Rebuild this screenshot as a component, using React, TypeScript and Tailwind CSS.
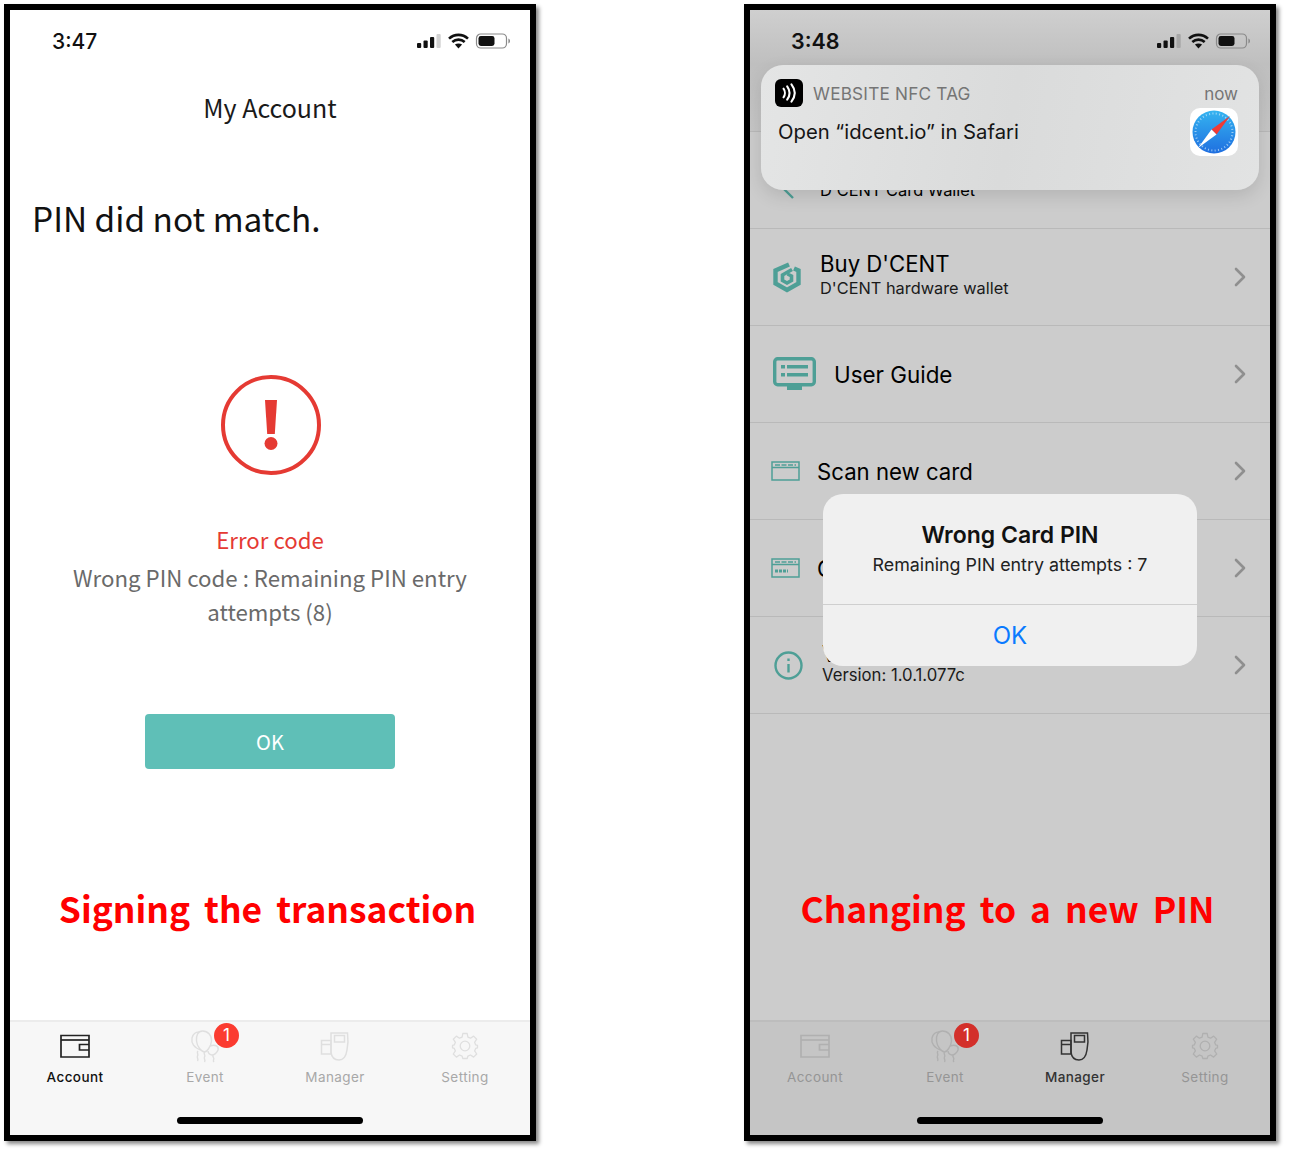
import React from "react";

const KR = "font-['Noto_Sans_CJK_KR','Noto_Sans',sans-serif]";
const IOS = "font-['Inter','Liberation_Sans',sans-serif]";

function StatusIcons({ bar, ink }: { bar: string; ink: string }) {
  return (
    <svg width="93" height="16" viewBox="0 0 93 16" fill="none">
      <rect x="0" y="10" width="4.2" height="5" rx="1" fill={ink} />
      <rect x="6.5" y="7.5" width="4.2" height="7.5" rx="1" fill={ink} />
      <rect x="13" y="4" width="4.2" height="11" rx="1" fill={ink} />
      <rect x="19.5" y="1" width="4.2" height="14" rx="1" fill={bar} />
      <path d="M32 5.6C37.5 .6 45.5 .6 51 5.6" stroke={ink} strokeWidth="2.6" />
      <path d="M35.3 9C38.9 5.8 44.1 5.8 47.7 9" stroke={ink} strokeWidth="2.6" />
      <path d="M41.5 15.4L37.9 11.6C39.9 10 43.1 10 45.1 11.6Z" fill={ink} />
      <rect x="59.5" y="1" width="30" height="14" rx="4.2" stroke="#8a8a8a" strokeWidth="1.2" />
      <rect x="61.5" y="3" width="16" height="10" rx="2.4" fill={ink} />
      <path d="M91.4 5.6C92.6 6 93 7 93 8C93 9 92.6 10 91.4 10.4Z" fill="#8a8a8a" />
    </svg>
  );
}

function WalletIcon({ c }: { c: string }) {
  return (
    <svg width="32" height="26" viewBox="0 0 32 26" fill="none" stroke={c} strokeWidth="1.7">
      <path d="M2 2.5H30V24H2Z" />
      <path d="M2 7H30" />
      <path d="M30 11.5H20.5V17H30" />
    </svg>
  );
}

function EventIcon({ c }: { c: string }) {
  return (
    <svg width="34" height="34" viewBox="0 0 34 34" fill="none" stroke={c} strokeWidth="1.4">
      <path d="M13 21C6 19 3 14 4 9C5 5 8 3 11 3" />
      <path d="M22 17C27 15 31 17 30 21C29 24 26 26 24 26C22 26 20 24 20 22" />
      <path d="M14.5 2C20 2 24 6.5 23.5 12C23 18 18.5 23 16.5 23C14 23 9 18 8.5 12C8 6.5 10 2 14.5 2Z" />
      <path d="M10 22C8 24 11 25 9.5 27C8.5 29 11 30 9.5 32" />
      <path d="M16.5 23C15 25 18 26 16.5 28C15.5 30 18 31 16.5 33" />
      <path d="M25 26C24 28 27 29 25.5 31C25 32 26 33 26 33" />
    </svg>
  );
}

function ManagerIcon({ c }: { c: string }) {
  return (
    <svg width="30" height="30" viewBox="0 0 30 30" fill="none" stroke={c} strokeWidth="1.5">
      <path d="M1.5 9.5H11V23H1.5Z" />
      <path d="M1.5 13.5H11" />
      <path d="M11 2H27.5C28 6 28.5 12 27 19C26 26 23.5 29 19 29C14.5 29 11.5 26 11 21Z" fill="none" />
      <path d="M14.5 4.5H24.5V11H14.5Z" />
    </svg>
  );
}

function GearIcon({ c }: { c: string }) {
  return (
    <svg width="28" height="28" viewBox="0 0 28 28" fill="none" stroke={c} strokeWidth="1.3">
      <circle cx="14" cy="14" r="4.8" />
      <path d="M11.8 1.5H16.2L16.9 5.1L19.5 6.2L22.6 4.1L25.7 7.2L23.6 10.3L24.7 12.9L26.5 13.4V15.8L24.7 16.4L23.6 18.9L25.7 22L22.6 25.1L19.5 23L16.9 24.1L16.2 26.5H11.8L11.1 24.1L8.5 23L5.4 25.1L2.3 22L4.4 18.9L3.3 16.4L1.5 15.8V13.4L3.3 12.9L4.4 10.3L2.3 7.2L5.4 4.1L8.5 6.2L11.1 5.1Z" strokeLinejoin="round" />
    </svg>
  );
}

function Tab({ label, color, weight, children, badge }: { label: string; color: string; weight: string; children: React.ReactNode; badge?: string }) {
  return (
    <div className="relative flex flex-col items-center">
      <div className="flex h-[36px] items-center justify-center">{children}</div>
      {badge && (
        <div className={`${IOS} absolute left-[74px] top-[-5px] flex h-[25px] w-[25px] items-center justify-center rounded-full text-[17px] text-white ${badge}`}>1</div>
      )}
      <div className={`${IOS} mt-[3px] text-[13.5px] leading-[20px] tracking-[0.4px] ${weight}`} style={{ color }}>{label}</div>
    </div>
  );
}

function Chevron() {
  return (
    <svg width="12" height="20" viewBox="0 0 12 20" fill="none" stroke="#8f8f8f" strokeWidth="2.6" strokeLinecap="round" strokeLinejoin="round" className="ml-auto mr-[24px] shrink-0">
      <path d="M2 2L10 10L2 18" />
    </svg>
  );
}

const TEAL = "#4e9f96";

function Caption({ text }: { text: string }) {
  return (
    <div className={`${KR} pointer-events-none absolute inset-x-0 top-[866px] pr-[5px] text-center text-[35.4px] font-bold leading-[64px] text-[#ff0000] [word-spacing:6px]`}>{text}</div>
  );
}

function Left() {
  return (
    <div className="relative flex h-[1137px] w-[532px] shrink-0 flex-col border-[6px] border-black bg-white shadow-[3px_3px_4px_#8a8a8a]">
      <div className="flex h-[62px] items-center justify-between pl-[42px] pr-[20px]">
        <span className={`${IOS} text-[21px] font-medium leading-none text-[#111]`}>3:47</span>
        <StatusIcons bar="#d2d2d2" ink="#111" />
      </div>
      <div className={`${KR} flex h-[72px] items-center justify-center text-[25px] text-[#1a1a1a]`}>My Account</div>
      <div className={`${KR} flex h-[148px] items-center pl-[22px] text-[33.4px] text-[#111]`}>PIN did not match.</div>
      <div className="mt-[83px] flex justify-center pl-[1px]">
        <svg width="100" height="100" viewBox="0 0 100 100">
          <circle cx="50" cy="50" r="48" fill="none" stroke="#e53a33" strokeWidth="4" />
          <path d="M44 25H56L53.8 59H46.2Z" fill="#e53a33" />
          <circle cx="50" cy="68.5" r="6.5" fill="#e53a33" />
        </svg>
      </div>
      <div className={`${KR} mt-[47px] text-center text-[22.25px] leading-[34px] text-[#e53a33]`}>Error code</div>
      <div className={`${KR} mt-[4px] px-[40px] text-center text-[22.25px] leading-[34px] text-[#6a6a6a]`}>Wrong PIN code : Remaining PIN entry attempts (8)</div>
      <div className="mt-[86px] flex justify-center">
        <div className={`${KR} flex h-[55px] w-[250px] items-center justify-center rounded-[4px] bg-[#5fbfb7] text-[20px] text-white`}>OK</div>
      </div>
      <div className="flex-1" />
      <div className="flex h-[115px] flex-col border-t-2 border-[#ececec] bg-[#f7f7f7]">
        <div className="grid grid-cols-4 pt-[6px]">
          <Tab label="Account" color="#111" weight="font-medium"><WalletIcon c="#222" /></Tab>
          <Tab label="Event" color="#a8a8a8" weight="font-normal" badge="bg-[#fb3b30]"><EventIcon c="#dfdfdf" /></Tab>
          <Tab label="Manager" color="#a8a8a8" weight="font-normal"><ManagerIcon c="#dfdfdf" /></Tab>
          <Tab label="Setting" color="#a8a8a8" weight="font-normal"><GearIcon c="#dfdfdf" /></Tab>
        </div>
        <div className="mt-auto mb-[11px] flex justify-center">
          <div className="h-[7px] w-[186px] rounded-full bg-black" />
        </div>
      </div>
      <Caption text="Signing the transaction" />
    </div>
  );
}

function Row({ children, pad }: { children: React.ReactNode; pad?: string }) {
  return (
    <div className={`flex h-[97px] items-center border-b border-[#b9b9b9] bg-[#cccccc] text-black ${pad ?? ""}`}>{children}</div>
  );
}

function Right() {
  return (
    <div className="relative flex h-[1137px] w-[532px] shrink-0 flex-col overflow-hidden border-[6px] border-black bg-[#cccccc] shadow-[3px_3px_4px_#8a8a8a]">
      <div className="h-[122px] border-b border-[#b9b9b9] bg-[linear-gradient(180deg,#cfcfcf_0%,#bfbfbf_45%,#c6c6c6_100%)]">
        <div className="flex h-[62px] items-center justify-between pl-[41px] pr-[20px]">
          <span className={`${IOS} mt-[1px] text-[21.5px] font-semibold leading-none text-[#111]`}>3:48</span>
          <StatusIcons bar="#a6a6a6" ink="#111" />
        </div>
      </div>
      <Row pad="pt-[20px] pl-[32px]">
        <svg width="14" height="20" viewBox="0 0 14 20" fill="none" stroke={TEAL} strokeWidth="2.4" className="shrink-0">
          <path d="M11 2L3 10L11 18" />
        </svg>
        <span className={`${IOS} ml-[24px] text-[16.4px] leading-none`}>D'CENT Card Wallet</span>
      </Row>
      <Row pad="pl-[22px]">
        <svg width="30" height="32" viewBox="0 0 30 32" fill="none" stroke={TEAL} strokeWidth="4.4" className="shrink-0">
          <path d="M17 3.5L3.5 9.5V22.5L15 29L26.5 22.5V9.5L22 7.5" />
          <path d="M20 8.5L10.5 14V19.5L15 22L19.5 19.5V15L15.5 13" strokeWidth="3.6" />
        </svg>
        <div className={`${IOS} ml-[18px] pb-[4px]`}>
          <div className="text-[22.2px] leading-[26px]">Buy D'CENT</div>
          <div className="text-[16.35px] leading-[22px] text-[#1a1a1a]">D'CENT hardware wallet</div>
        </div>
        <Chevron />
      </Row>
      <Row pad="pl-[23px]">
        <svg width="43" height="34" viewBox="0 0 43 34" fill="none" className="shrink-0">
          <rect x="1.7" y="1.7" width="39.6" height="26" rx="3" stroke={TEAL} strokeWidth="3.4" />
          <rect x="14" y="28" width="15" height="5" fill={TEAL} />
          <rect x="8" y="8" width="4" height="3.5" fill={TEAL} />
          <rect x="8" y="16" width="4" height="3.5" fill={TEAL} />
          <rect x="14" y="8" width="21" height="3.5" fill={TEAL} />
          <rect x="14" y="16" width="21" height="3.5" fill={TEAL} />
        </svg>
        <span className={`${IOS} ml-[18px] mt-[3px] text-[22.4px] leading-none`}>User Guide</span>
        <Chevron />
      </Row>
      <Row pad="pl-[21px]">
        <svg width="29" height="20" viewBox="0 0 29 20" fill="none" stroke={TEAL} strokeWidth="1.5" className="shrink-0">
          <rect x="1" y="1" width="27" height="18" />
          <path d="M1 6.5H28" />
          <path d="M4 4H25" strokeDasharray="5 1.5" />
        </svg>
        <span className={`${IOS} ml-[17px] mt-[3px] text-[22.2px] leading-none`}>Scan new card</span>
        <Chevron />
      </Row>
      <Row pad="pl-[21px]">
        <svg width="29" height="20" viewBox="0 0 29 20" fill="none" stroke={TEAL} strokeWidth="1.5" className="shrink-0">
          <rect x="1" y="1" width="27" height="18" />
          <path d="M1 6.5H28" />
          <path d="M4 4H25" strokeDasharray="5 1.5" />
          <path d="M4 13H17" strokeWidth="3" strokeDasharray="3 1" />
        </svg>
        <span className={`${IOS} ml-[17px] mt-[3px] text-[22.2px] leading-none`}>Change PIN</span>
        <Chevron />
      </Row>
      <Row pad="pl-[24px]">
        <svg width="29" height="29" viewBox="0 0 29 29" fill="none" stroke={TEAL} strokeWidth="2.4" className="shrink-0">
          <circle cx="14.5" cy="14.5" r="13" />
          <path d="M14.5 13V21.5" />
          <path d="M14.5 7.5V10" />
        </svg>
        <div className={`${IOS} ml-[19px]`}>
          <div className="text-[22.2px] leading-[20px]">Version</div>
          <div className="text-[16.7px] leading-[22px] text-[#1a1a1a]">Version: 1.0.1.077c</div>
        </div>
        <Chevron />
      </Row>
      <div className="flex-1" />
      <div className="flex h-[115px] flex-col border-t-2 border-[#bdbdbd] bg-[#c5c5c5]">
        <div className="grid grid-cols-4 pt-[6px]">
          <Tab label="Account" color="#959595" weight="font-normal"><WalletIcon c="#b0b0b0" /></Tab>
          <Tab label="Event" color="#959595" weight="font-normal" badge="bg-[#d32f2a]"><EventIcon c="#b0b0b0" /></Tab>
          <Tab label="Manager" color="#333" weight="font-medium"><ManagerIcon c="#333" /></Tab>
          <Tab label="Setting" color="#959595" weight="font-normal"><GearIcon c="#b0b0b0" /></Tab>
        </div>
        <div className="mt-auto mb-[11px] flex justify-center">
          <div className="h-[7px] w-[186px] rounded-full bg-black" />
        </div>
      </div>

      <div className="absolute left-[11px] top-[55px] h-[125px] w-[498px] rounded-[22px] bg-[linear-gradient(100deg,#e4e5e5_0%,#dadbdb_50%,#e2e3e3_100%)] pl-[14px] pr-[21px] pt-[14px] shadow-[0_6px_18px_rgba(0,0,0,0.12)]">
        <div className="flex h-[28px] items-center">
          <div className="flex h-[28px] w-[28px] items-center justify-center rounded-[6px] bg-black">
            <svg width="22" height="22" viewBox="0 0 18 18" fill="none" stroke="#fff" strokeWidth="1.7" strokeLinecap="round">
              <path d="M4.5 5.5C6 7.5 6 10.5 4.5 12.5" />
              <path d="M7.5 3.5C10 7 10 11 7.5 14.5" />
              <path d="M11 2C14.5 6.5 14.5 11.5 11 16" />
            </svg>
          </div>
          <span className={`${IOS} ml-[10px] mt-[2px] text-[17.2px] leading-none tracking-[0.2px] text-[#757575]`}>WEBSITE NFC TAG</span>
          <span className={`${IOS} ml-auto mt-[2px] text-[17px] leading-none text-[#757575]`}>now</span>
        </div>
        <div className="flex items-start">
          <span className={`${IOS} ml-[3px] mt-[13px] text-[20.25px] leading-[24px] text-[#151515]`}>Open “idcent.io” in Safari</span>
          <div className="ml-auto mt-[1px] flex h-[48px] w-[48px] items-center justify-center rounded-[10px] bg-white">
            <svg width="44" height="44" viewBox="0 0 44 44">
              <defs>
                <linearGradient id="saf" x1="0" y1="0" x2="0" y2="1">
                  <stop offset="0" stopColor="#35b4f0" />
                  <stop offset="1" stopColor="#1f6fe0" />
                </linearGradient>
              </defs>
              <circle cx="22" cy="22" r="21.5" fill="url(#saf)" />
              <circle cx="22" cy="22" r="18.5" fill="none" stroke="#cfe9fb" strokeWidth="2" strokeDasharray="1 2.4" opacity="0.7" />
              <path d="M38 6L24.5 24.5L19.5 19.5Z" fill="#f03a35" />
              <path d="M6 38L19.5 19.5L24.5 24.5Z" fill="#ffffff" />
            </svg>
          </div>
        </div>
      </div>

      <div className="absolute left-[73px] top-[484px] flex h-[172px] w-[374px] flex-col rounded-[20px] bg-[#f0f0f0]">
        <div className="h-[111px] border-b border-[#cfcfcf] pt-[26px] text-center">
          <div className={`${IOS} text-[23px] font-semibold leading-[30px] text-[#111]`}>Wrong Card PIN</div>
          <div className={`${IOS} mt-[1px] text-[17.85px] leading-[28px] text-[#222]`}>Remaining PIN entry attempts : 7</div>
        </div>
        <div className={`${IOS} flex flex-1 items-center justify-center pt-[1px] text-[24px] text-[#0a7aff]`}>OK</div>
      </div>
      <Caption text="Changing to a new PIN" />
    </div>
  );
}

export default function App() {
  return (
    <div className="flex h-[1154px] w-[1289px] gap-[208px] overflow-hidden bg-white pl-[4px] pt-[4px]">
      <Left />
      <Right />
    </div>
  );
}
